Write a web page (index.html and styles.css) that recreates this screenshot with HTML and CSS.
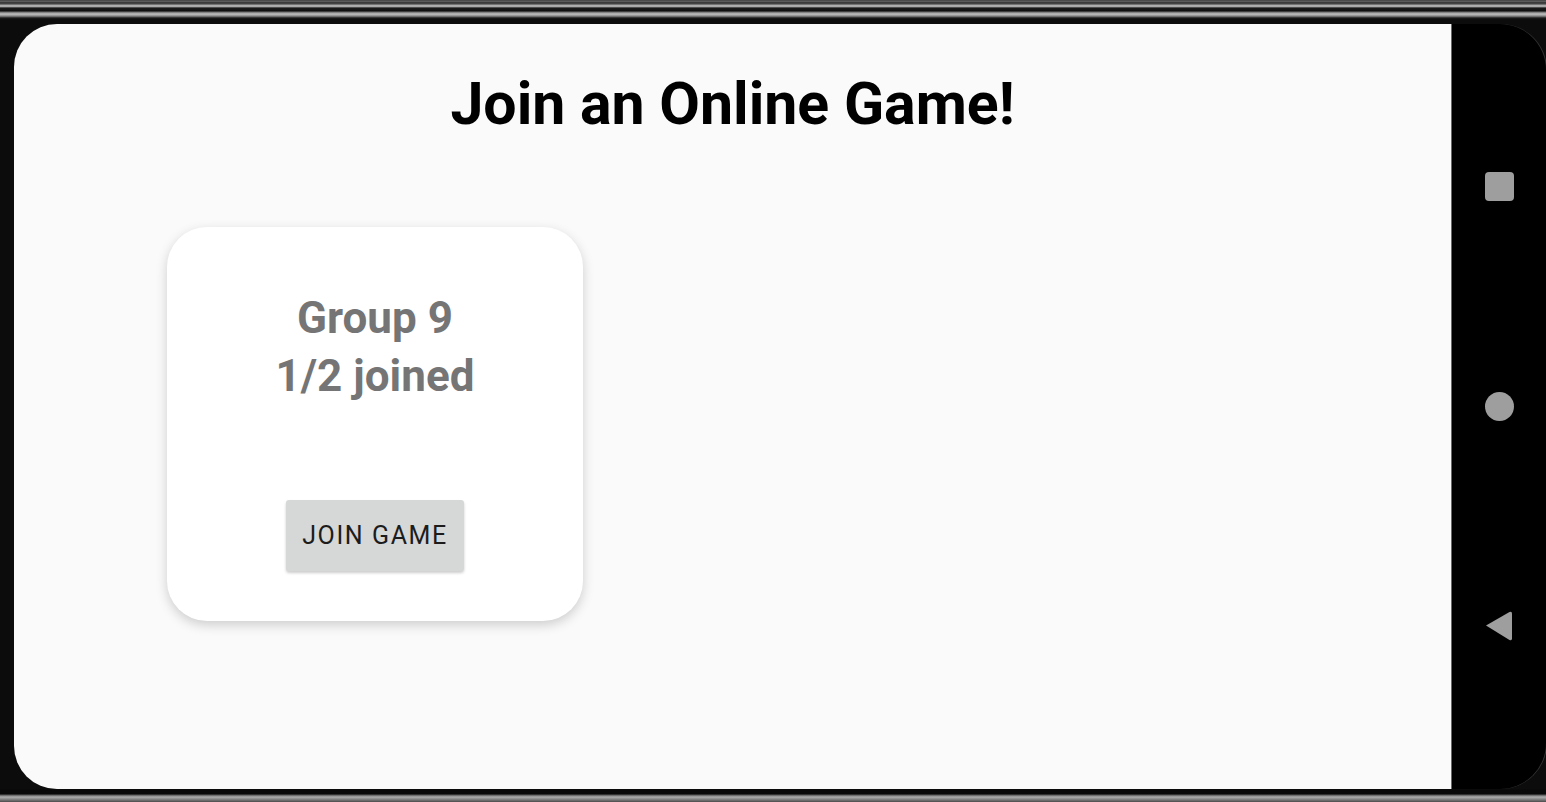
FILE: index.html
```html
<!DOCTYPE html>
<html>

<head>
    <title>Join an Online Game</title>
    <link rel="stylesheet" href="styles.css">
</head>

<body>
    <div class="bezel-top"></div>

    <div class="device">
        <div class="bezel-side"></div>

        <div class="screen">
            <h1>Join an Online Game!</h1>
            <div class="game-list">
                <div class="game-card">
                    <div class="game-info">
                        <div>Group 9</div>
                        <div>1/2 joined</div>
                    </div>
                    <button type="button" class="join-button">Join Game</button>
                </div>
            </div>
        </div>

        <div class="nav-bar">
            <div class="nav-recents"></div>
            <div class="nav-home"></div>
            <svg class="nav-back" width="28" height="32" viewBox="0 0 28 32">
                <path d="M1 15.5 L24.5 2 Q27 1 27 3.5 L27 28.5 Q27 31 24.5 30 Z" fill="#9e9e9e" />
            </svg>
        </div>
    </div>

    <div class="bezel-bottom"></div>
</body>

</html>
```

FILE: styles.css
```css
html,
body {
    margin: 0;
    padding: 0;
    height: 100%;
    overflow: hidden;
    background-color: #0c0c0c;
    font-family: Roboto, "Noto Sans", sans-serif;
}

.bezel-top {
    height: 24px;
    background: linear-gradient(to bottom,
            #2a2a2a 0px, #6a6a6a 1px, #2a2a2a 3px,
            #8a8a8a 5px, #d0d0d0 6px, #808080 7px,
            #1a1a1a 8px, #101010 11px,
            #6e6e6e 12px, #c4c4c4 14px, #8a8a8a 16px,
            #1c1c1c 18px, #0c0c0c 20px);
}

.device {
    display: flex;
    height: 765px;
}

.bezel-side {
    width: 14px;
    flex-shrink: 0;
}

.screen {
    width: 1438px;
    flex-shrink: 0;
    background-color: #fafafa;
    border-radius: 43px 0 0 43px;
    border-right: 1px solid #6a6a6a;
    box-sizing: border-box;
    display: flex;
    flex-direction: column;
}

h1 {
    margin: 46px 0 0 0;
    font-size: 59px;
    line-height: 68px;
    font-weight: 700;
    color: #000;
    text-align: center;
}

.game-list {
    display: flex;
    padding: 89px 0 0 153px;
}

.game-card {
    width: 416px;
    height: 394px;
    box-sizing: border-box;
    background-color: #fff;
    border-radius: 40px;
    box-shadow: 0 4px 12px rgba(0, 0, 0, 0.18);
    display: flex;
    flex-direction: column;
    align-items: center;
    padding-top: 62px;
}

.game-info {
    color: #757575;
    font-size: 44px;
    line-height: 58px;
    font-weight: 700;
    text-align: center;
}

.join-button {
    margin-top: 95px;
    width: 178px;
    height: 71px;
    border: none;
    border-radius: 3px;
    background-color: #d6d7d7;
    color: #1c1c1c;
    font-family: Roboto, sans-serif;
    font-size: 25px;
    font-weight: 400;
    letter-spacing: 1.6px;
    text-transform: uppercase;
    box-shadow: 0 2px 3px rgba(0, 0, 0, 0.2);
    padding: 0;
}

.nav-bar {
    width: 94px;
    flex-shrink: 0;
    background-color: #000;
    border-radius: 0 46px 46px 0;
    box-shadow: 1px 0 0 #333;
    display: flex;
    flex-direction: column;
    align-items: center;
    padding-top: 148px;
    box-sizing: border-box;
}

.nav-recents {
    width: 29px;
    height: 29px;
    border-radius: 4px;
    background-color: #9e9e9e;
    margin-left: 1px;
}

.nav-home {
    width: 29px;
    height: 29px;
    border-radius: 50%;
    background-color: #9e9e9e;
    margin-top: 191px;
}

.nav-back {
    margin-top: 189px;
}

.bezel-bottom {
    height: 13px;
    background: linear-gradient(to bottom,
            #0a0a0a 0px, #0a0a0a 5px,
            #5a5a5a 6px, #b0b0b0 8px, #8a8a8a 10px, #4a4a4a 13px);
}
```
